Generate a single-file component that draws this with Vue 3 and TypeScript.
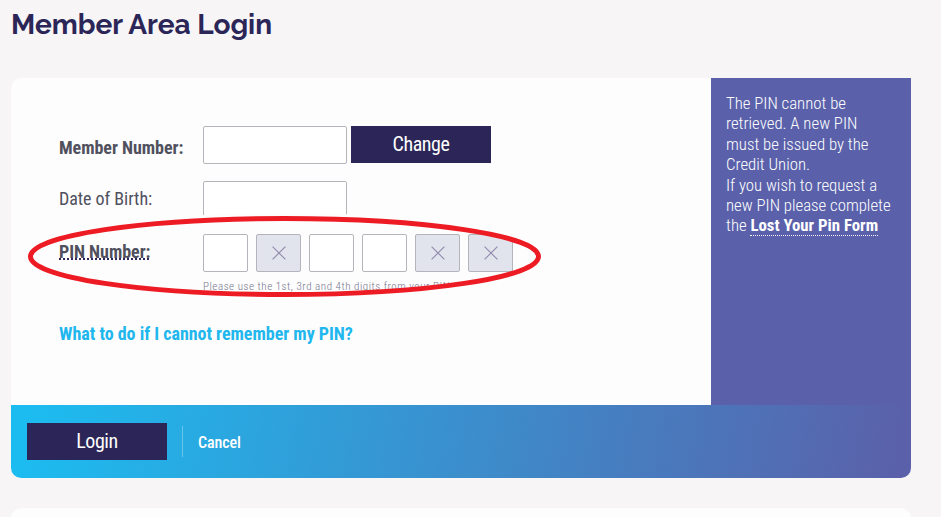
<script setup lang="ts">
interface PinBox {
  position: number
  required: boolean
}

const pinBoxes: PinBox[] = [1, 2, 3, 4, 5, 6].map((position) => ({
  position,
  required: [1, 3, 4].includes(position),
}))
</script>

<template>
  <main class="page">
    <h1 class="title">Member Area Login</h1>

    <form class="card" @submit.prevent>
      <div class="body">
        <section class="fields">
          <div class="row member">
            <label class="label strong" for="member">Member Number:</label>
            <input id="member" class="input" type="text" />
            <button class="button change" type="button">Change</button>
          </div>
          <div class="row birth">
            <label class="label" for="birth">Date of Birth:</label>
            <input id="birth" class="input" type="text" />
          </div>
          <div class="row pin">
            <div class="label strong"><abbr class="pin-label">PIN Number:</abbr></div>
            <div class="pin-boxes">
              <div v-for="box in pinBoxes" :key="box.position" class="pin-box" :class="{ disabled: !box.required }">
                <svg v-if="!box.required" width="14" height="14" viewBox="0 0 14 14">
                  <path d="M.6 .6L13.4 13.4M13.4 .6L.6 13.4" stroke="#8c8aab" stroke-width="1.1" fill="none" />
                </svg>
              </div>
            </div>
          </div>
          <p class="hint">Please use the 1st, 3rd and 4th digits from your PIN</p>
          <a class="forgot">What to do if I cannot remember my PIN?</a>

          <svg class="marker" width="530" height="98" viewBox="0 0 530 98">
            <ellipse cx="265" cy="48.5" rx="258" ry="41" fill="none" stroke="#fdfdfd" stroke-width="5" />
            <ellipse cx="264.5" cy="48.5" rx="254" ry="38" fill="none" stroke="#ed1c24" stroke-width="5" />
          </svg>
        </section>
        <aside class="side">
          <p>
            The PIN cannot be<br />retrieved. A new PIN<br />must be issued by the<br />Credit Union.<br />If you wish to
            request a<br />new PIN please complete<br />the <a class="form-link">Lost Your Pin Form</a>
          </p>
        </aside>
      </div>
      <footer class="actions">
        <button class="button login" type="submit">Login</button>
        <span class="divider"></span>
        <a class="cancel">Cancel</a>
      </footer>
    </form>

    <div class="next-card"></div>
  </main>
</template>

<style>
body {
  background: #f7f5f6;
  overflow: hidden;
}
</style>

<style scoped>
.page {
  box-sizing: border-box;
  width: 941px;
  height: 517px;
  padding: 0 30px 0 11px;
  overflow: hidden;
  font-family: "Roboto Condensed", Roboto, sans-serif;
  font-stretch: 75%;
  color: #50505e;
}
.title {
  height: 78px;
  margin: 0;
  font: 700 28px/50px Raleway, Lato, sans-serif;
  letter-spacing: -0.02px;
  color: #2b2657;
}
.card {
  height: 400px;
  border-radius: 10px 0 10px 10px;
  overflow: hidden;
  background: #fdfdfd;
}
.body {
  display: flex;
  height: 327px;
}
.fields {
  position: relative;
  box-sizing: border-box;
  width: 700px;
  padding: 48px 0 0 48px;
}
.row {
  display: flex;
  align-items: flex-start;
}
.label {
  width: 144px;
  padding-top: 8px;
  font-size: 18px;
  line-height: 28px;
  letter-spacing: -0.04px;
  white-space: nowrap;
}
.strong {
  font-weight: 700;
}
.input {
  box-sizing: border-box;
  width: 144px;
  height: 38px;
  border: 1px solid #b4b4ba;
  border-radius: 2px;
  background: #fff;
  outline: none;
}
.button {
  width: 140px;
  height: 37px;
  padding: 0;
  border: 0;
  background: #2b2657;
  color: #fff;
  font: inherit;
  font-size: 20px;
  line-height: 37px;
  letter-spacing: -0.4px;
}
.change {
  margin-left: 4px;
}
.birth {
  margin-top: 17px;
}
.birth .label {
  padding-top: 4px;
}
.pin {
  margin-top: 15px;
}
.pin .label {
  padding-top: 4px;
}
.pin-label {
  text-decoration: underline dotted #2b2657 1.5px;
  text-decoration-skip-ink: none;
  text-underline-offset: 0;
}
.pin-boxes {
  display: flex;
  gap: 8px;
}
.pin-box {
  box-sizing: border-box;
  display: flex;
  align-items: center;
  justify-content: center;
  width: 45px;
  height: 38px;
  border: 1px solid #b4b4ba;
  border-radius: 2px;
  background: #fff;
}
.disabled {
  background: #e1e3ed;
}
.hint {
  margin: 8px 0 0 144px;
  font-size: 11px;
  font-weight: 300;
  line-height: 14px;
  letter-spacing: 0.54px;
  color: #77758d;
  white-space: nowrap;
}
.forgot {
  display: inline-block;
  margin-top: 26px;
  font-size: 18px;
  font-weight: 700;
  line-height: 28px;
  letter-spacing: -0.02px;
  color: #20b6ee;
  white-space: nowrap;
}
.marker {
  position: absolute;
  left: 9px;
  top: 130px;
}
.side {
  box-sizing: border-box;
  width: 200px;
  padding: 15px;
  background: #5a61aa;
  color: #fff;
}
.side p {
  margin: 0;
  font-size: 16.8px;
  font-weight: 350;
  line-height: 20.4px;
  white-space: nowrap;
}
.form-link {
  font-weight: 700;
  border-bottom: 1px dotted #fff;
}
.actions {
  display: flex;
  align-items: center;
  height: 73px;
  padding-left: 16px;
  background: linear-gradient(100deg, #1cbcf0 2%, #5a61aa 98%);
}
.divider {
  width: 1px;
  height: 31px;
  margin: 0 15px;
  background: rgba(255, 255, 255, 0.3);
}
.cancel {
  padding-top: 1px;
  font-size: 16px;
  font-weight: 500;
  letter-spacing: -0.1px;
  color: #fff;
}
.next-card {
  height: 40px;
  margin-top: 30px;
  border-radius: 10px;
  background: #fdfdfd;
}
</style>
